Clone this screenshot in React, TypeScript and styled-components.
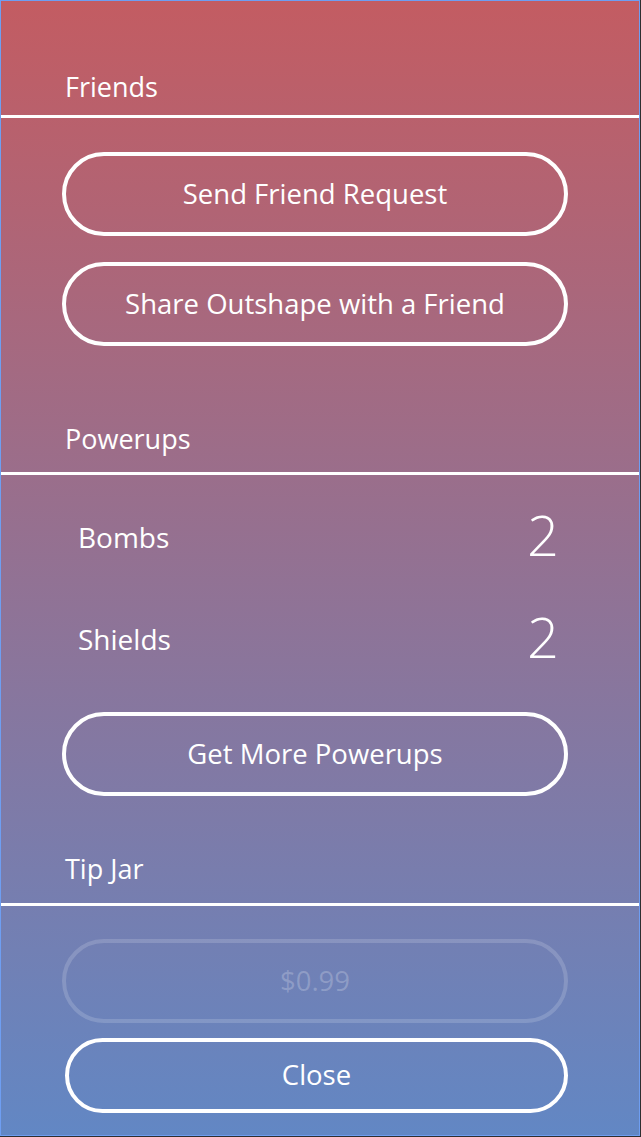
import React from "react";
import styled, { createGlobalStyle } from "styled-components";

const GlobalStyle = createGlobalStyle`
  html, body {
    margin: 0;
    padding: 0;
    background: #2e2e30;
  }
  * { box-sizing: border-box; }
`;

const Screen = styled.div`
  width: 640px;
  height: 1136px;
  border: 1px solid #6e9ef2;
  background: linear-gradient(180deg, #c35c62 0%, #6287c4 100%);
  display: flex;
  flex-direction: column;
  font-family: "Open Sans", "Noto Sans", sans-serif;
  color: #ffffff;
  overflow: hidden;
`;

const SectionHeader = styled.div<{ $height: number; $pb: number }>`
  height: ${(p) => p.$height}px;
  display: flex;
  align-items: flex-end;
  padding: 0 0 ${(p) => p.$pb}px 64px;
  font-size: 27px;
  line-height: 32px;
  flex-shrink: 0;
`;

const Divider = styled.div`
  height: 3px;
  background: #ffffff;
  margin: 0 -1px;
  flex-shrink: 0;
`;

const ButtonStack = styled.div<{ $pt: number; $gap: number }>`
  display: flex;
  flex-direction: column;
  gap: ${(p) => p.$gap}px;
  padding-top: ${(p) => p.$pt}px;
  flex-shrink: 0;
`;

const PillButton = styled.button<{ $disabled?: boolean; $height?: number; $inset?: number; $width?: number }>`
  margin-left: ${(p) => p.$inset ?? 61}px;
  width: ${(p) => p.$width ?? 506}px;
  height: ${(p) => p.$height ?? 84}px;
  border-radius: 999px;
  border: 4px solid ${(p) => (p.$disabled ? "rgba(255,255,255,0.16)" : "#ffffff")};
  background: transparent;
  color: ${(p) => (p.$disabled ? "rgba(255,255,255,0.22)" : "#ffffff")};
  font-family: inherit;
  font-size: 27.5px;
  display: flex;
  align-items: center;
  justify-content: center;
  padding: 0 0 2px;
  cursor: pointer;
`;

const CountList = styled.div`
  display: flex;
  flex-direction: column;
  padding-top: 11px;
  flex-shrink: 0;
`;

const CountRow = styled.div`
  height: 102px;
  display: flex;
  align-items: center;
  justify-content: space-between;
  padding: 0 80px 0 77px;
`;

const CountLabel = styled.span`
  font-size: 28px;
`;

const CountValue = styled.span`
  font-size: 56px;
  font-weight: 350;
  line-height: 1;
  margin-top: -6px;
`;

export default function App() {
  return (
    <>
      <GlobalStyle />
      <Screen>
        <SectionHeader $height={114} $pb={12}>Friends</SectionHeader>
        <Divider />
        <ButtonStack $pt={34} $gap={26}>
          <PillButton>Send Friend Request</PillButton>
          <PillButton>Share Outshape with a Friend</PillButton>
        </ButtonStack>
        <SectionHeader $height={126} $pb={17}>Powerups</SectionHeader>
        <Divider />
        <CountList>
          <CountRow>
            <CountLabel>Bombs</CountLabel>
            <CountValue>2</CountValue>
          </CountRow>
          <CountRow>
            <CountLabel>Shields</CountLabel>
            <CountValue>2</CountValue>
          </CountRow>
        </CountList>
        <ButtonStack $pt={22} $gap={0}>
          <PillButton>Get More Powerups</PillButton>
        </ButtonStack>
        <SectionHeader $height={107} $pb={18}>Tip Jar</SectionHeader>
        <Divider />
        <ButtonStack $pt={33} $gap={15}>
          <PillButton $disabled $height={84}>$0.99</PillButton>
          <PillButton $height={75} $inset={64} $width={503}>Close</PillButton>
        </ButtonStack>
      </Screen>
    </>
  );
}
